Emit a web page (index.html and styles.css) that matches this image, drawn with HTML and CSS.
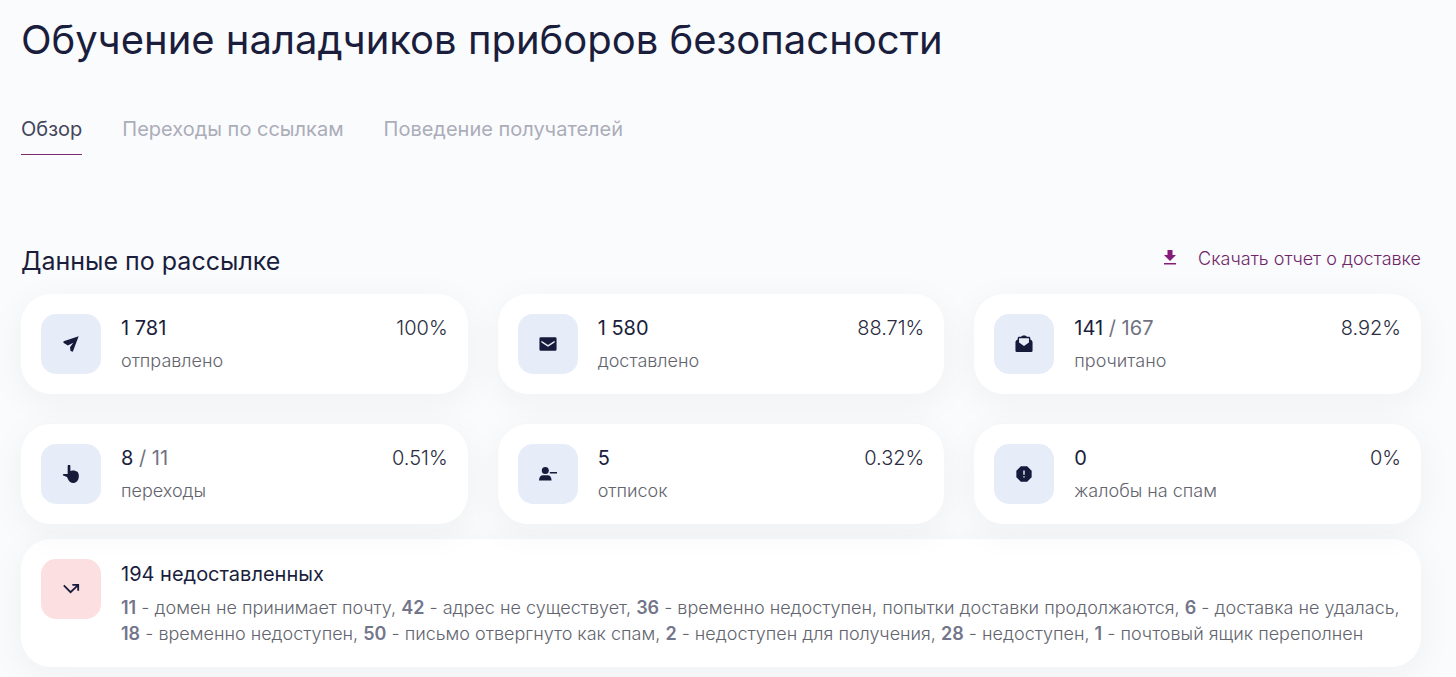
FILE: index.html
```html
<!DOCTYPE html>
<html lang="ru">
<head>
    <meta charset="utf-8">
    <title>Обучение наладчиков приборов безопасности</title>
    <link rel="stylesheet" href="styles.css">
</head>
<body>
    <h1 class="title">Обучение наладчиков приборов безопасности</h1>

    <nav class="tabs">
        <a class="tab active" href="#overview">Обзор</a>
        <a class="tab" href="#links">Переходы по ссылкам</a>
        <a class="tab" href="#behavior">Поведение получателей</a>
    </nav>

    <main id="overview">
        <div class="section-head">
            <h2>Данные по рассылке</h2>
            <a class="download" href="#report">
                <svg width="14" height="16" viewBox="0 0 14 16"><path d="M4.500 0h5v5H13L7 11 1 5h3.500zM1 13h12v1.500H1z"/></svg>
                Скачать отчет о доставке
            </a>
        </div>

        <div class="cards">
            <div class="card">
                <div class="icon"><svg width="20" height="20" viewBox="0 0 20 20"><path d="M18.500 1.500 12 18.500l-2.500-.8-.6-4.200 3.600-5-6 3.200L1.500 8.500l.3-1.600z"/></svg></div>
                <div class="info">
                    <div class="value">1 781</div>
                    <div class="label">отправлено</div>
                </div>
                <div class="percent">100%</div>
            </div>
            <div class="card">
                <div class="icon"><svg width="20" height="20" viewBox="0 0 20 20"><path fill-rule="evenodd" d="M2 2.500h16a1.500 1.500 0 0 1 1.500 1.500v12a1.500 1.500 0 0 1-1.500 1.500H2A1.500 1.500 0 0 1 .5 16V4A1.500 1.500 0 0 1 2 2.500zm.7 4v1.800l7.300 4.800 7.300-4.800V6.500L10 11.200z"/></svg></div>
                <div class="info">
                    <div class="value">1 580</div>
                    <div class="label">доставлено</div>
                </div>
                <div class="percent">88.71%</div>
            </div>
            <div class="card">
                <div class="icon"><svg width="20" height="20" viewBox="0 0 20 20"><path fill-rule="evenodd" d="M10 .5c1.600 0 2.600.6 3.200 1.500h2.300A1.500 1.500 0 0 1 17 3.500V5c1.700.8 2.500 1.700 2.500 3v9.500A1.500 1.500 0 0 1 18 19H2a1.500 1.500 0 0 1-1.500-1.500V8c0-1.300.8-2.200 2.500-3V3.500A1.500 1.500 0 0 1 4.500 2h2.300C7.400 1.100 8.400.5 10 .5zM4.500 3.500V8.300l5.500 4 5.500-4V3.500z"/></svg></div>
                <div class="info">
                    <div class="value">141 <span class="total">/ 167</span></div>
                    <div class="label">прочитано</div>
                </div>
                <div class="percent">8.92%</div>
            </div>
            <div class="card">
                <div class="icon"><svg width="20" height="20" viewBox="0 0 20 20"><path d="M6.300 1.200a1.500 1.500 0 0 1 3 0v5.600c1-.7 2.200-.9 3.300-.6 1.100-.2 2.200 0 3 .8 1.200.1 2.200 1 2.500 2.200.6 1.100.8 2.700.5 4.300-.4 3.900-2.900 6.400-6.200 6.400-2.600 0-4.500-1.400-5.400-3.600l-1.500-3.100-4-1.400c-.9-.4-.6-1.700.4-1.800l4.400-.1z"/></svg></div>
                <div class="info">
                    <div class="value">8 <span class="total">/ 11</span></div>
                    <div class="label">переходы</div>
                </div>
                <div class="percent">0.51%</div>
            </div>
            <div class="card">
                <div class="icon"><svg width="20" height="20" viewBox="0 0 20 20"><circle cx="7" cy="6" r="3.900"/><path d="M0 17.200c.2-3.600 1.800-5.700 4.500-5.700h5c2.700 0 4.300 2.100 4.500 5.700zM12 7.700h8v1.700h-8z"/></svg></div>
                <div class="info">
                    <div class="value">5</div>
                    <div class="label">отписок</div>
                </div>
                <div class="percent">0.32%</div>
            </div>
            <div class="card">
                <div class="icon"><svg width="20" height="20" viewBox="0 0 20 20"><path fill-rule="evenodd" d="M6.500 1.500h7l5 5v7l-5 5h-7l-5-5v-7zm2.700 4.700v4.600h1.600V6.200zm0 6.200V14h1.600v-1.600z"/></svg></div>
                <div class="info">
                    <div class="value">0</div>
                    <div class="label">жалобы на спам</div>
                </div>
                <div class="percent">0%</div>
            </div>
        </div>

        <div class="card failed">
            <div class="icon icon-red"><svg width="20" height="20" viewBox="0 0 20 20"><path class="line" d="M2 6l7.500 7.500L17.500 6M11.500 5.500h6.500v6.500"/></svg></div>
            <div class="info">
                <div class="value">194 недоставленных</div>
                <p class="reasons"><b>11</b> - домен не принимает почту, <b>42</b> - адрес не существует, <b>36</b> - временно недоступен, попытки доставки продолжаются, <b>6</b> - доставка не удалась, <b>18</b> - временно недоступен, <b>50</b> - письмо отвергнуто как спам, <b>2</b> - недоступен для получения, <b>28</b> - недоступен, <b>1</b> - почтовый ящик переполнен</p>
            </div>
        </div>
    </main>
</body>
</html>
```
FILE: styles.css
```css
body {
    margin: 0;
    padding: 16px 35px 10px 21px;
    font-family: Inter, sans-serif;
    background: #fafbfd;
    color: #1a1e3c;
}
h1, h2, p {
    margin: 0;
    font-weight: 400;
}
a {
    text-decoration: none;
}
.title {
    font-size: 40px;
    line-height: 48px;
}
.tabs {
    display: flex;
    gap: 40px;
    margin-top: 50px;
}
.tab {
    padding-bottom: 10px;
    font-size: 20px;
    line-height: 30px;
    color: #abadb9;
    border-bottom: 1px solid transparent;
}
.tab.active {
    color: #43465a;
    border-bottom-color: #7b2a6e;
}
.section-head {
    display: flex;
    justify-content: space-between;
    margin-top: 90px;
    margin-bottom: 17px;
}
.section-head h2 {
    font-size: 25px;
    line-height: 32px;
}
.download {
    display: flex;
    align-items: center;
    gap: 21px;
    height: 26px;
    font-size: 18px;
    font-weight: 300;
    color: #6f2568;
}
.download svg {
    fill: #851c79;
}
.cards {
    display: grid;
    grid-template-columns: repeat(3, 1fr);
    gap: 30px;
}
.card {
    display: flex;
    gap: 20px;
    padding: 20px;
    background: #fff;
    border-radius: 30px;
    box-shadow: 0 8px 36px rgba(30, 35, 45, 0.05);
}
.icon {
    display: flex;
    flex: none;
    align-items: center;
    justify-content: center;
    width: 60px;
    height: 60px;
    border-radius: 15px;
    background: #e6ecf8;
}
.icon svg {
    width: 18px;
    height: 18px;
    fill: #171b3b;
}
.icon-red {
    background: #fbdfe1;
}
.icon .line {
    fill: none;
    stroke: #171b3b;
    stroke-width: 2;
}
.info {
    flex: 1;
}
.value {
    font-size: 20px;
    line-height: 28px;
}
.total {
    color: #70727f;
}
.label {
    margin-top: 6px;
    font-size: 18px;
    font-weight: 300;
    line-height: 25px;
    color: #62646e;
}
.percent {
    font-size: 20px;
    font-weight: 300;
    line-height: 28px;
    color: #2a2d40;
}
.failed {
    margin-top: 15px;
    padding-right: 10px;
}
.failed .value {
    line-height: 30px;
}
.reasons {
    margin-top: 6px;
    font-size: 18px;
    font-weight: 300;
    line-height: 26px;
    color: #62646e;
}
.reasons b {
    font-weight: 600;
    color: #73768a;
}
```
